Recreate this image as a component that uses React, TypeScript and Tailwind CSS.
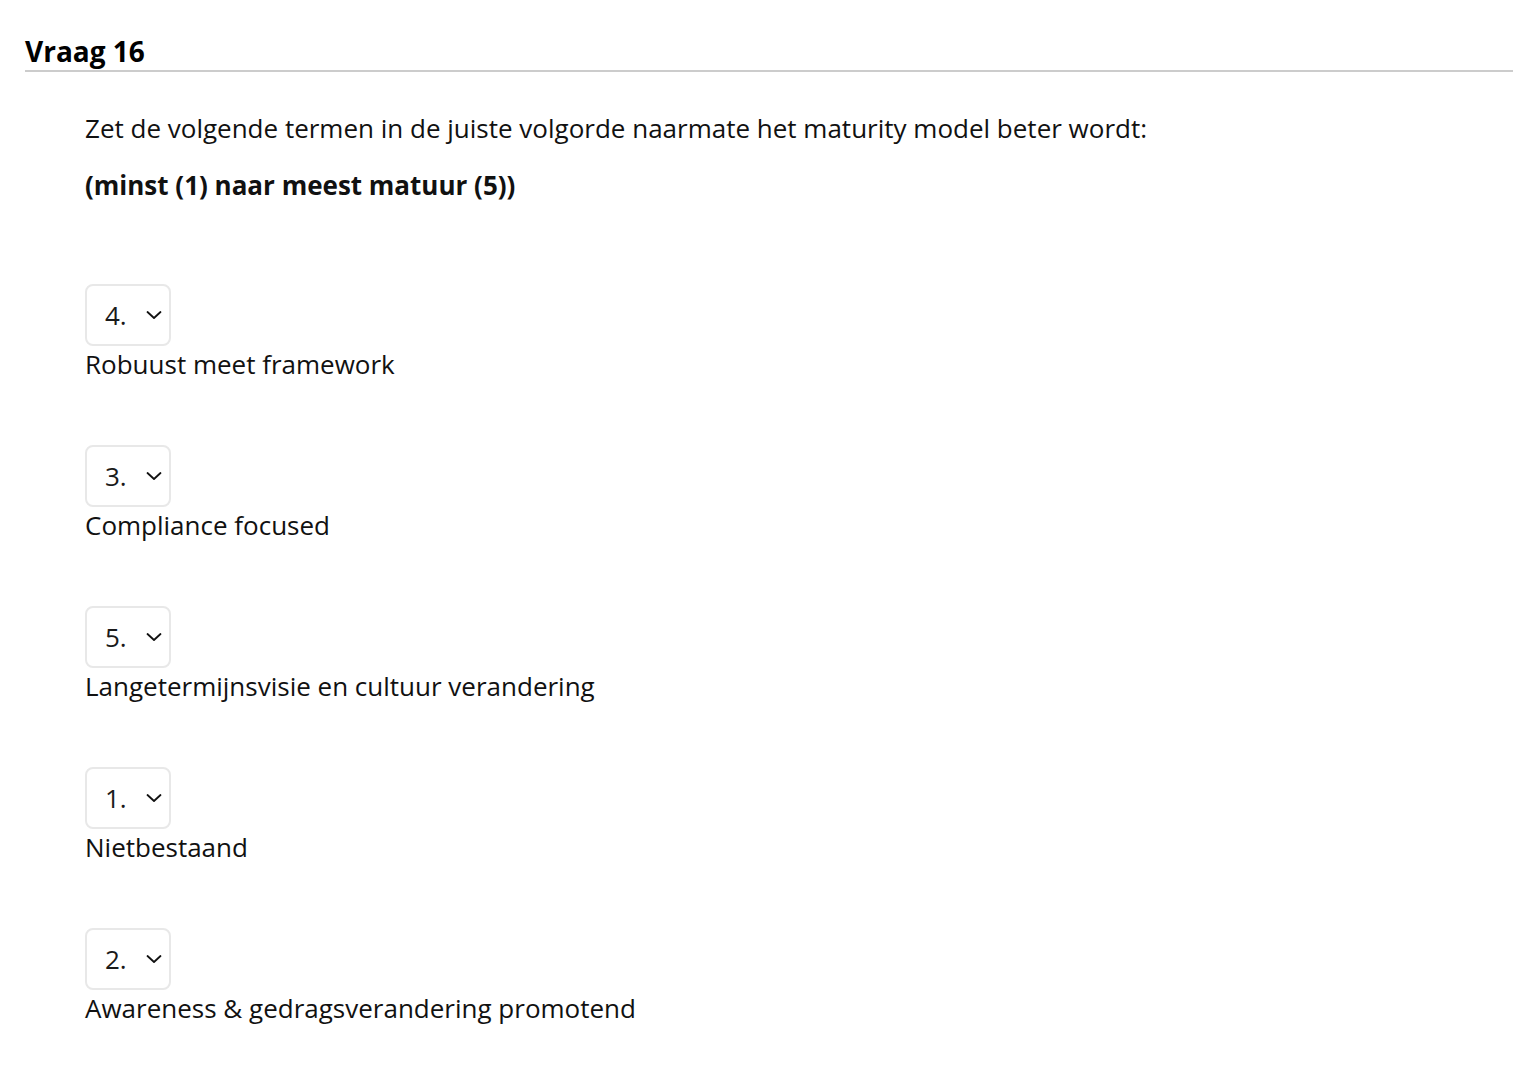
import React, { useState } from 'react';

const items = [
  { value: '4', label: 'Robuust meet framework' },
  { value: '3', label: 'Compliance focused' },
  { value: '5', label: 'Langetermijnsvisie en cultuur verandering' },
  { value: '1', label: 'Nietbestaand' },
  { value: '2', label: 'Awareness & gedragsverandering promotend' },
];

function OrderSelect({ value, label }: { value: string; label: string }) {
  const [current, setCurrent] = useState(value);
  return (
    <div className="mb-[63px]">
      <div className="relative w-[86px] h-[62px]">
        <select
          value={current}
          onChange={(e) => setCurrent(e.target.value)}
          className="appearance-none w-full h-full border-2 border-[#e8e8e8] rounded-lg bg-white pl-[18px] text-[26px] text-[#1a1a1a] outline-none"
        >
          {['1', '2', '3', '4', '5'].map((n) => (
            <option key={n} value={n}>
              {n}.
            </option>
          ))}
        </select>
        <svg
          className="absolute right-[9px] top-[25px] pointer-events-none"
          width="16"
          height="12"
          viewBox="0 0 16 12"
          fill="none"
        >
          <path d="M1.5 3 L8 9 L14.5 3" stroke="#111" strokeWidth="1.8" strokeLinecap="round" strokeLinejoin="round" />
        </svg>
      </div>
      <p className="text-[26px] leading-[36px] text-[#111]">{label}</p>
    </div>
  );
}

export default function App() {
  return (
    <div className="min-h-screen bg-white pl-[25px] pt-[32px]" style={{ fontFamily: '"Open Sans", sans-serif' }}>
      <h2 className="text-[28px] leading-[38px] font-bold text-black">Vraag 16</h2>
      <div className="h-[2px] bg-[#cccccc]" />
      <div className="pl-[60px] pt-[38px]">
        <p className="text-[26px] leading-[36px] text-[#111]">
          Zet de volgende termen in de juiste volgorde naarmate het maturity model beter wordt:
        </p>
        <p className="mt-[21px] text-[26px] leading-[36px] font-bold text-[#111]">(minst (1) naar meest matuur (5))</p>
        <div className="pt-[81px]">
          {items.map((item) => (
            <OrderSelect key={item.label} value={item.value} label={item.label} />
          ))}
        </div>
      </div>
    </div>
  );
}
